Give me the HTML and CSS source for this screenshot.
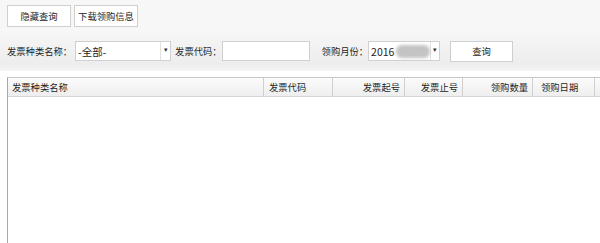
FILE: index.html
```html
<!DOCTYPE html>
<html lang="zh-CN">

<head>
    <meta charset="UTF-8">
    <title>发票领购信息</title>
    <link rel="stylesheet" href="styles.css">
</head>

<body>
    <div class="toolbar">
        <button class="btn">隐藏查询</button>
        <button class="btn">下载领购信息</button>
    </div>

    <div class="search">
        <label class="field-label">发票种类名称：</label>
        <div class="combo combo-type">
            <span class="combo-text">-全部-</span>
            <span class="combo-arrow">▾</span>
        </div>

        <label class="field-label label-code">发票代码：</label>
        <input class="text-input" type="text">

        <label class="field-label label-month">领购月份：</label>
        <div class="combo combo-month">
            <span class="combo-text">2016<span class="blur"></span></span>
            <span class="combo-arrow">▾</span>
        </div>

        <button class="btn btn-query">查询</button>
    </div>

    <div class="grid">
        <div class="grid-head">
            <div class="col col-name">发票种类名称</div>
            <div class="col col-code">发票代码</div>
            <div class="col col-start right">发票起号</div>
            <div class="col col-end right">发票止号</div>
            <div class="col col-qty right">领购数量</div>
            <div class="col col-date">领购日期</div>
            <div class="col col-rest"></div>
        </div>
        <div class="grid-body"></div>
    </div>
</body>

</html>
```

FILE: styles.css
```css
body {
    margin: 0;
    font-family: "Noto Sans CJK SC", "Liberation Sans", sans-serif;
    font-size: 9.3px;
    color: #1e1e1e;
    background-color: #fff;
    width: 600px;
    height: 243px;
    overflow: hidden;
}

.toolbar {
    display: flex;
    gap: 3px;
    padding: 5px 7px 4px;
    background-color: #f7f7f7;
}

.btn {
    height: 22px;
    width: 64px;
    padding: 0;
    border: 1px solid #cfcfcf;
    background-color: #fff;
    font-family: inherit;
    font-size: 9.3px;
    color: #1e1e1e;
}

.search {
    display: flex;
    align-items: center;
    height: 40px;
    padding: 0 7px;
    background: linear-gradient(#f6f6f6, #ededed 85%, #f6f6f6);
}

.field-label {
    white-space: nowrap;
}

.label-code {
    margin-left: 4px;
}

.label-month {
    margin-left: 12px;
}

.combo {
    display: flex;
    height: 20px;
    border: 1px solid #d0d0d0;
    background-color: #fff;
    box-sizing: border-box;
}

.combo-type {
    width: 96px;
    margin-left: 3px;
}

.combo-month {
    width: 72px;
}

.combo-text {
    flex: 1;
    display: flex;
    align-items: center;
    padding-left: 2px;
    font-size: 10.5px;
}

.combo-arrow {
    width: 9px;
    border-left: 1px solid #e0e0e0;
    font-size: 7px;
    text-align: center;
    line-height: 14px;
    color: #333;
}

.blur {
    display: inline-block;
    width: 34px;
    height: 13px;
    margin-left: 2px;
    border-radius: 6px;
    background-color: #c4c4c4;
    filter: blur(1.5px);
}

.text-input {
    width: 88px;
    height: 20px;
    box-sizing: border-box;
    border: 1px solid #d0d0d0;
    margin: 0;
}

.btn-query {
    margin-left: 10px;
    width: 63px;
    height: 21px;
}

.grid {
    margin: 6px 0 0 7px;
    border-left: 1px solid #a8a8a8;
    border-top: 1px solid #c8c8c8;
    height: 166px;
}

.grid-head {
    display: flex;
    height: 18px;
    border-bottom: 1px solid #d6d6d6;
    background: linear-gradient(#fbfbfb, #eeeeee);
}

.col {
    box-sizing: border-box;
    border-right: 1px solid #cfcfcf;
    line-height: 18px;
    padding: 0 4px;
    white-space: nowrap;
    flex-shrink: 0;
}

.right {
    text-align: right;
}

.col-name {
    width: 256px;
}

.col-code {
    width: 69px;
    padding-left: 5px;
}

.col-start {
    width: 72px;
}

.col-end {
    width: 58px;
}

.col-qty {
    width: 70px;
}

.col-date {
    width: 62px;
    padding-left: 8px;
}

.col-rest {
    flex: 1;
    border-right: none;
}

.grid-body {
    background-color: #fff;
}
```
